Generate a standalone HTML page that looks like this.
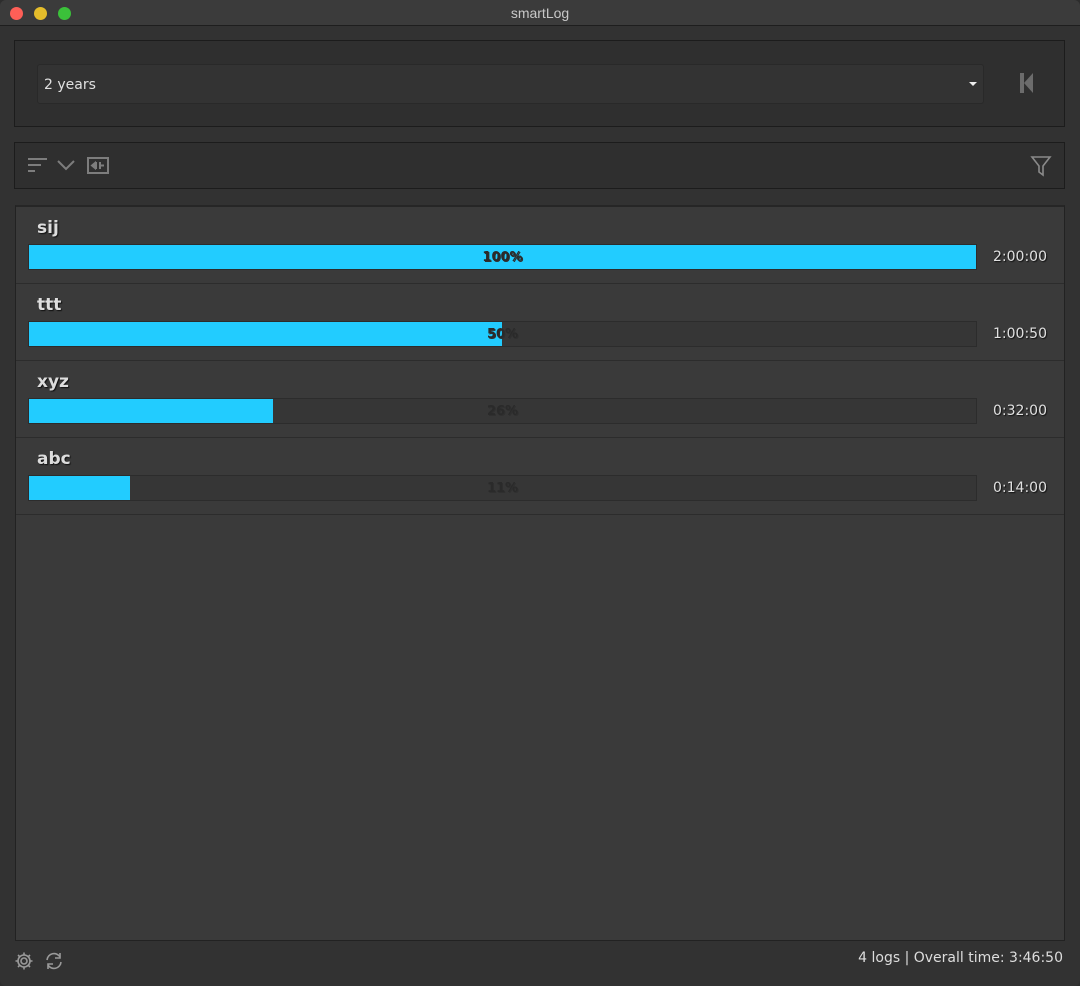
<!DOCTYPE html>
<html><head><meta charset="utf-8"><style>
*{margin:0;padding:0;box-sizing:border-box}
body{width:1080px;height:986px;background:#2d2d2d;font-family:"DejaVu Sans","Liberation Sans",sans-serif;position:relative;overflow:hidden}
.win{position:absolute;left:0;top:0;width:1080px;height:986px;background:#323232;border-radius:6px;overflow:hidden}
.title{position:absolute;left:0;top:0;width:1080px;height:26px;background:#3b3b3b;border-bottom:1px solid #1e1e1e;text-align:center;color:#c8c8c8;font-size:14px;line-height:26px;font-family:"Liberation Sans",sans-serif}
.dot{position:absolute;top:7px;width:13px;height:13px;border-radius:50%}
.panel{position:absolute;left:14px;width:1051px;background:#2f2f2f;border:1px solid #1c1c1c}
.combo{position:absolute;left:37px;top:64px;width:947px;height:40px;background:#333;border:1px solid #292929;border-radius:3px;color:#e0e0e0;font-size:14px;line-height:40px;padding-left:6px}
.list{position:absolute;left:15px;top:205px;width:1050px;height:736px;background:#3a3a3a;border:1px solid #222;border-top:2px solid #262626}
.row{position:absolute;left:0;width:1048px;height:77px;border-bottom:1px solid #2c2c2c}
.name{position:absolute;left:21px;top:11px;font-size:17px;font-weight:bold;color:#ddd;text-shadow:1px 1px 1px #111}
.track{position:absolute;left:12px;top:37px;width:949px;height:26px;background:#363636;border:1px solid #2c2c2c}
.fill{position:absolute;left:0;top:0;height:24px;background:#22ccff}
.pct{position:absolute;left:0;top:1px;width:947px;text-align:center;font-size:13px;font-weight:bold;line-height:24px;color:#2a2a2a;text-shadow:1px 1px 0 #2f2f2f}
.time{position:absolute;left:977px;top:42px;font-size:14px;color:#e0e0e0;text-shadow:1px 1px 1px #111}
.foot{position:absolute;right:17px;top:950px;color:#ddd;font-size:14px}
</style></head><body><div class="win">
<div class="title">smartLog
<div class="dot" style="left:10px;background:#fe5f57"></div>
<div class="dot" style="left:34px;background:#e5bd2b"></div>
<div class="dot" style="left:58px;background:#3bc13a"></div></div>
<div class="panel" style="top:40px;height:87px"></div>
<div class="combo">2 years<span style="position:absolute;right:6px;top:17px;width:0;height:0;border-left:4px solid transparent;border-right:4px solid transparent;border-top:4px solid #eee"></span></div>
<svg style="position:absolute;left:1018px;top:72px" width="18" height="22"><rect x="2" y="1" width="4" height="20" fill="#6c6c6c"/><path d="M6 11 L15 1 V21Z" fill="#6c6c6c"/></svg>
<div class="panel" style="top:142px;height:47px"></div>
<svg style="position:absolute;left:26px;top:156px" width="90" height="20" fill="none" stroke="#7d7d7d" stroke-width="2">
<path d="M2 3H21M2 9H15M2 15H9"/><path d="M32 5L40 13L48 5"/><rect x="62" y="2" width="20" height="15"/><path d="M66 9.5H70M78 9.5H74M70 6V13M74 6V13" stroke-width="2"/><path d="M66 9.5L69 7V12Z" fill="#7d7d7d"/></svg>
<svg style="position:absolute;left:1030px;top:155px" width="22" height="22" fill="none" stroke="#8a8a8a" stroke-width="1.6"><path d="M2 2H20L13 11V20L9 17V11Z"/></svg>
<div class="list">
<div class="row" style="top:0"><div class="name">sij</div><div class="track"><div class="fill" style="width:947px"></div><div class="pct">100%</div></div><div class="time">2:00:00</div></div>
<div class="row" style="top:77px"><div class="name">ttt</div><div class="track"><div class="fill" style="width:473px"></div><div class="pct">50%</div></div><div class="time">1:00:50</div></div>
<div class="row" style="top:154px"><div class="name">xyz</div><div class="track"><div class="fill" style="width:244px"></div><div class="pct">26%</div></div><div class="time">0:32:00</div></div>
<div class="row" style="top:231px"><div class="name">abc</div><div class="track"><div class="fill" style="width:101px"></div><div class="pct">11%</div></div><div class="time">0:14:00</div></div>
</div>
<svg style="position:absolute;left:13px;top:950px" width="56" height="22" fill="none" stroke="#9a9a9a" stroke-width="1.6">
<circle cx="11" cy="11" r="3"/><path d="M11 2.5V5M11 17V19.5M2.5 11H5M17 11H19.5M5 5L6.8 6.8M15.2 15.2L17 17M5 17L6.8 15.2M15.2 6.8L17 5"/><circle cx="11" cy="11" r="6"/>
<path d="M34 10A7 7 0 0 1 47 7M48 12A7 7 0 0 1 35 15"/><path d="M47 3V8H42M35 19V14H40"/></svg>
<div class="foot">4 logs | Overall time: 3:46:50</div>
</div></body></html>
